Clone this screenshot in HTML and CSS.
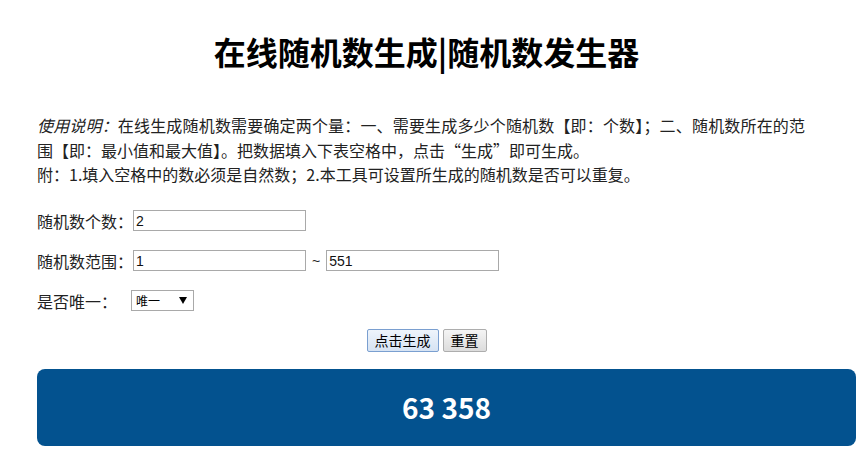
FILE: index.html
```html
<!DOCTYPE html>
<html lang="zh-CN">
  <head>
    <meta charset="UTF-8" />
    <meta name="viewport" content="width=device-width, initial-scale=1.0" />
    <title>在线随机数生成|随机数发生器</title>
    <link rel="stylesheet" href="styles.css">
  </head>
  <body>
    <div class="page">
      <h1>在线随机数生成|随机数发生器</h1>

      <p class="intro">
        <span class="first-line"><em>使用说明：</em>在线生成随机数需要确定两个量：一、需要生成多少个随机数【即：个数】；二、随机数所在的范</span>围【即：最小值和最大值】。把数据填入下表空格中，点击“生成”即可生成。<br>
        附：1.填入空格中的数必须是自然数；2.本工具可设置所生成的随机数是否可以重复。
      </p>

      <div class="form">
        <div class="row">
          <label for="count">随机数个数：</label>
          <input type="text" id="count" value="2" />
        </div>
        <div class="row">
          <label for="min">随机数范围：</label>
          <input type="text" id="min" value="1" />
          <span class="tilde">~</span>
          <input type="text" id="max" value="551" />
        </div>
        <div class="row">
          <label for="unique">是否唯一：</label>
          <select id="unique" class="unique">
            <option value="1">唯一</option>
            <option value="0">可重复</option>
          </select>
        </div>
        <div class="row buttons">
          <button class="btn btn-main" id="gen">点击生成</button>
          <button class="btn" id="reset">重置</button>
        </div>
      </div>

      <div class="result" id="result">63 358</div>
    </div>
  </body>
</html>
```

FILE: styles.css
```css
body {
  margin: 0;
  padding: 0;
  background-color: #fff;
  color: #222;
  font-family: "Noto Sans CJK SC", "Noto Sans", sans-serif;
  font-size: 16px;
}
.page {
  width: 779px;
  margin-left: 37px;
}
h1 {
  margin: 28px 0 0;
  font-size: 32px;
  line-height: 46px;
  font-weight: 700;
  color: #000;
  text-align: center;
}
.intro {
  margin: 39px 0 0;
  line-height: 24.5px;
}
.intro em {
  font-style: italic;
}
.first-line {
  display: block;
  width: 768px;
  text-align: justify;
  text-align-last: justify;
}
.form {
  margin-top: 14px;
}
.row {
  display: flex;
  align-items: center;
  height: 40px;
}
.row label {
  white-space: nowrap;
}
.row input {
  box-sizing: border-box;
  width: 173px;
  height: 21px;
  margin: 0;
  padding: 1px 2px;
  border: 1px solid #a9a9a9;
  font-family: "Liberation Sans", Arial, sans-serif;
  font-size: 14px;
  color: #111;
}
.tilde {
  margin: 0 6px;
  font-family: "Liberation Sans", Arial, sans-serif;
  font-size: 14px;
}
.unique {
  box-sizing: border-box;
  width: 63px;
  height: 21px;
  margin: 0 0 0 14px;
  padding: 0 4px;
  border: 1px solid #a9a9a9;
  border-radius: 0;
  -webkit-appearance: none;
  appearance: none;
  background: #fff url("data:image/svg+xml;utf8,<svg xmlns='http://www.w3.org/2000/svg' width='8' height='7'><path d='M0 0h8L4 7z' fill='%23000'/></svg>") no-repeat right 6px center;
  font-family: "Noto Sans CJK SC", sans-serif;
  font-size: 12px;
  color: #000;
}
.buttons {
  justify-content: center;
  gap: 4px;
}
.btn {
  height: 23px;
  margin: 0;
  padding: 0 7px;
  border: 1px solid #adadad;
  border-radius: 2px;
  background: linear-gradient(#f4f4f4, #dcdcdc);
  font-family: "Noto Sans CJK SC", sans-serif;
  font-size: 14px;
  line-height: 19px;
  color: #000;
  cursor: pointer;
}
.btn-main {
  border-color: #7a9fd0;
  background: linear-gradient(#eef4fb, #d6e3f3);
}
.result {
  width: 100%;
  height: 77px;
  margin-top: 8px;
  padding: 0 20px;
  display: flex;
  align-items: center;
  justify-content: center;
  background-color: #03528f;
  border-radius: 8px;
  color: #fff;
  font-size: 28px;
  font-weight: 700;
}
```
